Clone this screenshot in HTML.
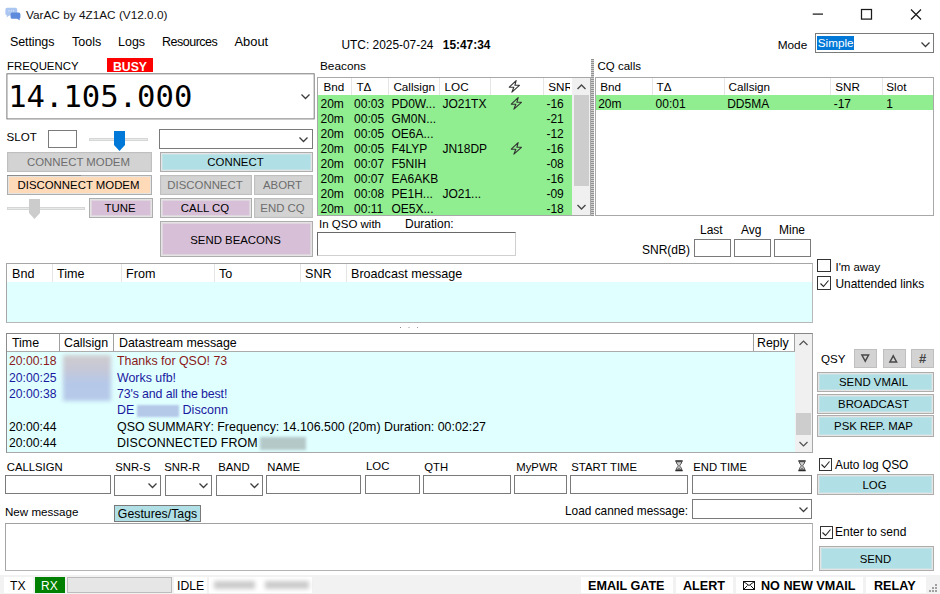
<!DOCTYPE html>
<html lang="en">
<head>
<meta charset="utf-8">
<title>VarAC by 4Z1AC (V12.0.0)</title>
<style>
html,body{margin:0;padding:0;background:#fff;}
body{width:940px;height:594px;position:relative;overflow:hidden;font-family:"Liberation Sans",sans-serif;font-size:12.4px;color:#000;}
#w{position:absolute;left:0;top:0;width:940px;height:594px;overflow:hidden;background:#fff;}
#w *{box-sizing:border-box;}
.t{position:absolute;white-space:nowrap;line-height:16px;height:16px;}
.box{position:absolute;background:#fff;border:1px solid #7a7a7a;}
.btn{position:absolute;border:1px solid #adadad;box-shadow:inset 0 0 0 1px #e4e4e4,inset 0 0 0 2px rgba(228,228,228,0.6);text-align:center;white-space:nowrap;font-size:11.4px;padding-right:2px;display:flex;align-items:center;justify-content:center;}
.grey{background:#d3d3d3;color:#6d6d6d;border-color:#bfbfbf;box-shadow:inset 0 0 0 1px #d0d0d0;}
.flat{box-shadow:none;padding-right:0;}
.blue{background:#b0e0e6;box-shadow:inset 0 0 0 1px #e4e4e4,inset 0 0 0 2px rgba(228,228,228,0.35);}
.peach{background:#ffdab9;box-shadow:inset 0 0 0 1px #e4e4e4;}
.th{background:#d8bfd8;}
.list{position:absolute;border:1px solid #a8a8a8;background:#fff;overflow:hidden;}
.hd{position:absolute;left:0;top:0;right:0;background:#fff;}
.t.h{font-size:11.7px;line-height:17px;height:17px;}
.t.r{font-size:12px;line-height:15px;height:15px;}
.sep{position:absolute;top:0;width:1px;background:#e5e5e5;}
.row{position:absolute;left:0;right:0;}
.chk{position:absolute;width:13px;height:13px;border:1px solid #333;background:#fff;}
.sb{position:absolute;background:#f0f0f0;}
.sp{position:absolute;background:#fff;top:577px;height:16px;}
.st{font-weight:bold;font-size:12.6px;}
svg{position:absolute;overflow:visible;}
</style>
</head>
<body>
<div id="w">

<!-- title bar -->
<svg style="left:5px;top:7px" width="16" height="14" viewBox="0 0 16 14">
  <path d="M2.200 0.800h8.200a1.800 1.800 0 0 1 1.800 1.800v4.200a1.800 1.800 0 0 1-1.800 1.800H4.200l-2.600 1.900 0.400-1.900a1.800 1.800 0 0 1-1.600-1.800V2.600a1.800 1.800 0 0 1 1.800-1.800z" fill="#abc6f0"/>
  <path d="M7.200 5.600h6.600a1.600 1.600 0 0 1 1.600 1.600v3a1.600 1.600 0 0 1-1 1.500l0.600 1.900-2.900-1.800H7.200a1.600 1.600 0 0 1-1.600-1.600v-3a1.600 1.600 0 0 1 1.600-1.600z" fill="#5f8bdc"/>
  <circle cx="4" cy="3.800" r="0.600" fill="#e8f0fc"/><circle cx="6.200" cy="3.800" r="0.600" fill="#e8f0fc"/><circle cx="8.400" cy="3.800" r="0.600" fill="#e8f0fc"/>
</svg>
<div class="t" style="left:26px;top:6.700px;font-size:11.8px;color:#111;">VarAC by 4Z1AC (V12.0.0)</div>
<svg style="left:812px;top:8px" width="112" height="13" viewBox="0 0 112 13" fill="none" stroke="#1a1a1a" stroke-width="1.25">
  <path d="M0.700 6.100h10.300"/>
  <rect x="49.500" y="1.500" width="10" height="9.600"/>
  <path d="M99 1.500l10 10M109 1.500l-10 10"/>
</svg>

<!-- menu -->
<div class="t" style="left:10px;top:34px;font-size:12.5px;letter-spacing:-0.1px;">Settings</div>
<div class="t" style="left:72px;top:34px;font-size:12.5px;">Tools</div>
<div class="t" style="left:118px;top:34px;font-size:12.5px;">Logs</div>
<div class="t" style="left:162px;top:34px;font-size:12.5px;letter-spacing:-0.5px;">Resources</div>
<div class="t" style="left:234.500px;top:34px;font-size:12.900px;">About</div>

<div class="t" style="left:341.500px;top:37px;font-size:11.9px;">UTC: 2025-07-24</div>
<div class="t" style="left:442.800px;top:37px;font-size:11.9px;font-weight:bold;">15:47:34</div>

<div class="t" style="left:777.700px;top:36.500px;font-size:11.8px;">Mode</div>
<div class="box" style="left:814.500px;top:33px;width:119.500px;height:20px;"></div>
<div class="t" style="left:817px;top:36px;height:13.500px;line-height:13.500px;width:36.500px;background:#0078d7;color:#fff;font-size:11.7px;padding-left:0.800px;">Simple</div>
<svg style="left:921px;top:41.500px" width="9" height="6" viewBox="0 0 9 6" fill="none" stroke="#3c3c3c" stroke-width="1.25"><path d="M0.500 0.500l4 4 4-4"/></svg>

<!-- frequency -->
<div class="t" style="left:7px;top:58px;font-size:11.4px;">FREQUENCY</div>
<div class="t" style="left:107px;top:58px;width:46px;height:14px;line-height:18px;background:#ff0000;color:#fff;font-weight:bold;font-size:12.3px;text-align:center;">BUSY</div>
<svg style="left:0;top:0" width="320" height="125"><rect x="6.900" y="73.800" width="307.300" height="45.100" fill="#fff" stroke="#7a7a7a" stroke-width="1"/></svg>
<div class="t" style="left:8.200px;top:78px;height:38px;line-height:38px;font-family:'DejaVu Sans Mono','Liberation Mono',monospace;font-size:30.6px;">14.105.000</div>
<svg style="left:301px;top:93.500px" width="9" height="6" viewBox="0 0 9 6" fill="none" stroke="#3c3c3c" stroke-width="1.25"><path d="M0.500 0.500l4 4 4-4"/></svg>

<!-- slot row -->
<div class="t" style="left:6.500px;top:128.500px;font-size:11.6px;">SLOT</div>
<div class="box" style="left:48px;top:130px;width:29px;height:18px;"></div>
<div style="position:absolute;left:89px;top:138px;width:59px;height:3px;background:#e7eaea;border:1px solid #d6d6d6;"></div>
<svg style="left:113.500px;top:130.500px" width="11" height="20" viewBox="0 0 11 20"><path d="M0 0h11v14l-5.500 6L0 14z" fill="#0078d7"/></svg>
<div class="box" style="left:159px;top:129px;width:154px;height:20px;"></div>
<svg style="left:299px;top:137px" width="9" height="6" viewBox="0 0 9 6" fill="none" stroke="#3c3c3c" stroke-width="1.25"><path d="M0.500 0.500l4 4 4-4"/></svg>

<!-- buttons -->
<div class="btn grey" style="left:7px;top:152px;width:145px;height:20px;">CONNECT MODEM</div>
<div class="btn blue" style="left:160px;top:152px;width:153px;height:20px;">CONNECT</div>
<div class="btn peach" style="left:7px;top:175px;width:145px;height:20px;">DISCONNECT MODEM</div>
<div style="position:absolute;left:7px;top:175px;width:74px;height:1px;background:#8c8c8c;z-index:2;"></div>
<div class="btn grey" style="left:160px;top:175px;width:92px;height:20px;">DISCONNECT</div>
<div class="btn grey" style="left:254px;top:175px;width:59px;height:20px;">ABORT</div>
<div style="position:absolute;left:7px;top:207px;width:78px;height:3px;background:#e7eaea;border:1px solid #d6d6d6;"></div>
<svg style="left:29px;top:199px" width="11" height="20" viewBox="0 0 11 20"><path d="M0 0h11v14l-5.500 6L0 14z" fill="#cccccc"/></svg>
<div class="btn th" style="left:89px;top:198px;width:64px;height:20px;">TUNE</div>
<div class="btn th" style="left:160px;top:198px;width:92px;height:20px;">CALL CQ</div>
<div class="btn grey" style="left:254px;top:198px;width:59px;height:20px;">END CQ</div>
<div class="btn th" style="left:160px;top:221px;width:153px;height:36px;padding-top:1px;">SEND BEACONS</div>

<!--LISTS-->
<!-- beacons -->
<div class="t" style="left:320px;top:57.500px;font-size:11.8px;">Beacons</div>
<div class="list" id="beacons" style="left:317px;top:77px;width:274px;height:139px;background:#90ee90;">
  <div class="hd" style="height:17px;"></div>
  <div class="sep" style="left:32.5px;height:17px;"></div>
  <div class="sep" style="left:69.5px;height:17px;"></div>
  <div class="sep" style="left:121px;height:17px;"></div>
  <div class="sep" style="left:171.5px;height:17px;"></div>
  <div class="sep" style="left:225px;height:17px;"></div>
  <div class="t h" style="left:5.4px;top:0px;">Bnd</div>
  <div class="t h" style="left:38.4px;top:0px;">TΔ</div>
  <div class="t h" style="left:75.4px;top:0px;">Callsign</div>
  <div class="t h" style="left:126.6px;top:0px;">LOC</div>
  <div class="t h" style="left:230.3px;top:0px;width:22px;overflow:hidden;">SNR</div>
  <svg style="left:190.4px;top:1.6px" width="12.700" height="12.700" viewBox="0 0 12 12" fill="none" stroke="#333" stroke-width="1.05" stroke-linejoin="round"><path d="M7.700 0.600L1.200 6.800h4.300l-1.800 4.700 7.100-6.500H6.500z"/></svg>
  <div class="t r" style="left:2.5px;top:19px;">20m</div><div class="t r" style="left:36.1px;top:19px;">00:03</div><div class="t r" style="left:73.5px;top:19px;">PD0W...</div><div class="t r" style="left:124.4px;top:19px;">JO21TX</div><div class="t r" style="left:228.4px;top:19px;">-16</div><svg style="left:191.9px;top:19.3px" width="12.700" height="12.700" viewBox="0 0 12 12" fill="none" stroke="#333" stroke-width="1.05" stroke-linejoin="round"><path d="M7.700 0.600L1.200 6.800h4.300l-1.800 4.700 7.100-6.500H6.500z"/></svg>
  <div class="t r" style="left:2.5px;top:34px;">20m</div><div class="t r" style="left:36.1px;top:34px;">00:05</div><div class="t r" style="left:73.5px;top:34px;">GM0N...</div><div class="t r" style="left:228.4px;top:34px;">-21</div>
  <div class="t r" style="left:2.5px;top:49px;">20m</div><div class="t r" style="left:36.1px;top:49px;">00:05</div><div class="t r" style="left:73.5px;top:49px;">OE6A...</div><div class="t r" style="left:228.4px;top:49px;">-12</div>
  <div class="t r" style="left:2.5px;top:64px;">20m</div><div class="t r" style="left:36.1px;top:64px;">00:05</div><div class="t r" style="left:73.5px;top:64px;">F4LYP</div><div class="t r" style="left:124.4px;top:64px;">JN18DP</div><div class="t r" style="left:228.4px;top:64px;">-16</div><svg style="left:191.9px;top:64.3px" width="12.700" height="12.700" viewBox="0 0 12 12" fill="none" stroke="#333" stroke-width="1.05" stroke-linejoin="round"><path d="M7.700 0.600L1.200 6.800h4.300l-1.800 4.700 7.100-6.500H6.500z"/></svg>
  <div class="t r" style="left:2.5px;top:79px;">20m</div><div class="t r" style="left:36.1px;top:79px;">00:07</div><div class="t r" style="left:73.5px;top:79px;">F5NIH</div><div class="t r" style="left:228.4px;top:79px;">-08</div>
  <div class="t r" style="left:2.5px;top:94px;">20m</div><div class="t r" style="left:36.1px;top:94px;">00:07</div><div class="t r" style="left:73.5px;top:94px;">EA6AKB</div><div class="t r" style="left:228.4px;top:94px;">-16</div>
  <div class="t r" style="left:2.5px;top:109px;">20m</div><div class="t r" style="left:36.1px;top:109px;">00:08</div><div class="t r" style="left:73.5px;top:109px;">PE1H...</div><div class="t r" style="left:124.4px;top:109px;">JO21...</div><div class="t r" style="left:228.4px;top:109px;">-09</div>
  <div class="t r" style="left:2.5px;top:124px;">20m</div><div class="t r" style="left:36.1px;top:124px;">00:11</div><div class="t r" style="left:73.5px;top:124px;">OE5X...</div><div class="t r" style="left:228.4px;top:124px;">-18</div>
  <div class="sb" style="left:254px;top:0;width:18px;height:137px;"></div>
  <div style="position:absolute;left:255.500px;top:17px;width:15.500px;height:90.500px;background:#cdcdcd;"></div>
  <svg style="left:258.800px;top:6px" width="9" height="6" viewBox="0 0 9 6" fill="none" stroke="#484848" stroke-width="1.4"><path d="M0.500 5l4-4 4 4"/></svg>
  <svg style="left:258.600px;top:126px" width="9" height="6" viewBox="0 0 9 6" fill="none" stroke="#484848" stroke-width="1.4"><path d="M0.500 1l4 4 4-4"/></svg>
</div>

<!-- cq calls -->
<div class="t" style="left:597.500px;top:58px;font-size:11.5px;">CQ calls</div>
<div class="list" id="cq" style="left:595px;top:77px;width:339px;height:139px;">
  <div class="hd" style="height:17px;"></div>
  <div class="sep" style="left:55.5px;height:17px;"></div>
  <div class="sep" style="left:128.3px;height:17px;"></div>
  <div class="sep" style="left:234.4px;height:17px;"></div>
  <div class="sep" style="left:286.1px;height:17px;"></div>
  <div class="t h" style="left:4.2px;top:0px;">Bnd</div>
  <div class="t h" style="left:60.5px;top:0px;">TΔ</div>
  <div class="t h" style="left:132.5px;top:0px;">Callsign</div>
  <div class="t h" style="left:239.3px;top:0px;">SNR</div>
  <div class="t h" style="left:290.3px;top:0px;">Slot</div>
  <div class="row" style="top:17px;height:15px;background:#90ee90;"></div>
  <div class="t r" style="left:2.2px;top:19px;">20m</div>
  <div class="t r" style="left:59.6px;top:19px;">00:01</div>
  <div class="t r" style="left:131.2px;top:19px;">DD5MA</div>
  <div class="t r" style="left:237.7px;top:19px;">-17</div>
  <div class="t r" style="left:290.2px;top:19px;">1</div>
</div>
<!--/LISTS-->

<!-- splitter -->
<div style="position:absolute;left:591px;top:59px;width:3px;height:157px;background-color:#b0b0b0;background-image:repeating-linear-gradient(180deg,#929292 0 1px,#cfcfcf 1px 2px);"></div>

<!-- in qso -->
<div class="t" style="left:319px;top:216px;font-size:11.5px;">In QSO with</div>
<div class="t" style="left:405px;top:216px;font-size:12px;">Duration:</div>
<div class="box" style="left:317px;top:232px;width:199px;height:24px;border-color:#696969 #d0d0d0 #d0d0d0 #696969;"></div>

<div class="t" style="left:700px;top:222px;font-size:12px;">Last</div>
<div class="t" style="left:741px;top:222px;font-size:12px;">Avg</div>
<div class="t" style="left:779px;top:222px;font-size:12px;">Mine</div>
<div class="t" style="left:642px;top:242px;font-size:12px;">SNR(dB)</div>
<div class="box" style="left:694px;top:239px;width:37px;height:18px;"></div>
<div class="box" style="left:734px;top:239px;width:37px;height:18px;"></div>
<div class="box" style="left:774px;top:239px;width:37px;height:18px;"></div>

<!-- broadcast list -->
<div class="list" id="bc" style="left:6px;top:263px;width:807px;height:60px;background:#e0ffff;border-color:#a6a6a6 #b8b8b8 #b8b8b8 #a6a6a6;">
  <div class="hd" style="height:18px;"></div>
  <div class="sep" style="left:45px;height:18px;"></div>
  <div class="sep" style="left:114px;height:18px;"></div>
  <div class="sep" style="left:207px;height:18px;"></div>
  <div class="sep" style="left:293px;height:18px;"></div>
  <div class="sep" style="left:339px;height:18px;"></div>
  <div class="t" style="left:5px;top:2px;font-size:12.6px;">Bnd</div>
  <div class="t" style="left:50px;top:2px;font-size:12.6px;">Time</div>
  <div class="t" style="left:119px;top:2px;font-size:12.6px;">From</div>
  <div class="t" style="left:212px;top:2px;font-size:12.6px;">To</div>
  <div class="t" style="left:298px;top:2px;font-size:12.6px;">SNR</div>
  <div class="t" style="left:344px;top:2px;font-size:12.6px;">Broadcast message</div>
</div>

<div class="chk" style="left:817px;top:259px;width:14px;"></div>
<div class="t" style="left:835.500px;top:259px;font-size:11.4px;">I'm away</div>
<div class="chk" style="left:817px;top:276px;width:14px;height:14px;"></div>
<svg style="left:818.500px;top:277.500px" width="11" height="11" viewBox="0 0 11 11" fill="none" stroke="#222" stroke-width="1.1"><path d="M1.500 5.500l3 3 5-6"/></svg>
<div class="t" style="left:835.500px;top:276px;font-size:11.9px;">Unattended links</div>

<!-- dots -->
<div style="position:absolute;left:399.500px;top:327px;width:1px;height:1px;background:#8a8a8a;box-shadow:8.500px 0 0 #999,17px 0 0 #999;"></div>

<!-- datastream -->
<div class="list" id="ds" style="left:6px;top:333px;width:807px;height:120px;background:#e0ffff;border-color:#868686 #a8a8a8 #a8a8a8 #8c8c8c;">
  <div class="hd" style="height:18px;border-bottom:1px solid #ababab;"></div>
  <div class="sep" style="left:52px;height:17px;background:#a0a0a0;"></div>
  <div class="sep" style="left:106px;height:17px;background:#a0a0a0;"></div>
  <div class="sep" style="left:745.500px;height:17px;background:#a0a0a0;"></div><div class="sep" style="left:787px;height:17px;background:#a0a0a0;"></div>
  <div class="t" style="left:5px;top:1px;">Time</div>
  <div class="t" style="left:57px;top:1px;">Callsign</div>
  <div class="t" style="left:112px;top:1px;">Datastream message</div>
  <div class="t" style="left:750px;top:1px;">Reply</div>
  <div class="t" style="left:2px;top:19px;font-size:12.2px;color:#8b1a1a;">20:00:18</div>
  <div class="t" style="left:110px;top:19px;color:#8b1a1a;">Thanks for QSO! 73</div>
  <div class="t" style="left:2px;top:36px;font-size:12.2px;color:#1a1aa0;">20:00:25</div>
  <div class="t" style="left:110px;top:36px;color:#1a1aa0;">Works ufb!</div>
  <div class="t" style="left:2px;top:52px;font-size:12.2px;color:#1a1aa0;">20:00:38</div>
  <div class="t" style="left:110px;top:52px;color:#1a1aa0;letter-spacing:-0.14px;">73's and all the best!</div>
  <div class="t" style="left:110px;top:68px;color:#1a1aa0;">DE</div>
  <div class="t" style="left:175.500px;top:68px;color:#1a1aa0;font-size:12.6px;">Disconn</div>
  <div class="t" style="left:2px;top:85px;font-size:12.2px;">20:00:44</div>
  <div class="t" style="left:110px;top:85px;">QSO SUMMARY: Frequency: 14.106.500 (20m) Duration: 00:02:27</div>
  <div class="t" style="left:2px;top:101px;font-size:12.2px;">20:00:44</div>
  <div class="t" style="left:110px;top:101px;letter-spacing:0.1px;">DISCONNECTED FROM</div>
  <div style="position:absolute;left:56px;top:21px;width:48px;height:46px;background:linear-gradient(180deg,#cfcccf 0%,#c6c8d6 30%,#b6c8e8 60%,#b6cae9 100%);filter:blur(2.2px);"></div>
  <div style="position:absolute;left:130px;top:71px;width:42px;height:12px;background:#b4c8e8;filter:blur(1px);"></div>
  <div style="position:absolute;left:253px;top:103px;width:46px;height:13px;background:#b4c8c8;filter:blur(1.5px);"></div>
  <div class="sb" style="left:788px;top:0;width:17px;height:118px;"></div>
  <div style="position:absolute;left:789px;top:79px;width:15px;height:22px;background:#cdcdcd;"></div>
  <svg style="left:792px;top:6px" width="9" height="6" viewBox="0 0 9 6" fill="none" stroke="#505050" stroke-width="1.2"><path d="M0.500 5l4-4 4 4"/></svg>
  <svg style="left:792px;top:106.500px" width="9" height="6" viewBox="0 0 9 6" fill="none" stroke="#505050" stroke-width="1.2"><path d="M0.500 1l4 4 4-4"/></svg>
</div>

<!-- right buttons -->
<div class="t" style="left:821px;top:351.300px;font-size:11.6px;">QSY</div>
<div class="btn grey flat" style="left:854px;top:349px;width:23px;height:19px;"><svg style="position:static;margin:-1px 1px 0 0" width="8.500" height="8" viewBox="0 0 8.500 8" fill="none" stroke="#484848" stroke-width="1.45"><path d="M0.900 1h6.700L4.250 7.200z"/></svg></div>
<div class="btn grey flat" style="left:882.500px;top:349px;width:23px;height:19px;"><svg style="position:static;margin:0 1px 0 0" width="8.500" height="8" viewBox="0 0 8.500 8" fill="none" stroke="#484848" stroke-width="1.45"><path d="M0.900 7h6.700L4.250 0.800z"/></svg></div>
<div class="btn grey flat" style="left:911px;top:349px;width:23px;height:19px;font-size:13px;color:#444;font-weight:bold;">#</div>
<div class="btn blue" style="left:817px;top:372px;width:117px;height:20px;padding-right:4px;">SEND VMAIL</div>
<div class="btn blue" style="left:817px;top:394px;width:117px;height:20px;padding-right:4px;">BROADCAST</div>
<div class="btn blue" style="left:817px;top:415px;width:117px;height:22px;padding-right:4px;">PSK REP. MAP</div>

<!-- log row -->
<div class="t" style="left:6.800px;top:459.300px;font-size:11.3px;">CALLSIGN</div>
<div class="t" style="left:115.3px;top:459.300px;font-size:11.3px;">SNR-S</div>
<div class="t" style="left:164.3px;top:459.300px;font-size:11.3px;">SNR-R</div>
<div class="t" style="left:218.3px;top:459.300px;font-size:11.3px;">BAND</div>
<div class="t" style="left:267.3px;top:459.300px;font-size:11.3px;">NAME</div>
<div class="t" style="left:366px;top:458.300px;font-size:11.4px;">LOC</div>
<div class="t" style="left:424.3px;top:459.300px;font-size:11.3px;">QTH</div>
<div class="t" style="left:516.3px;top:459.300px;font-size:11.3px;">MyPWR</div>
<div class="t" style="left:571.3px;top:459.300px;font-size:11.3px;">START TIME</div>
<div class="t" style="left:693.3px;top:459.300px;font-size:11.3px;">END TIME</div>
<div class="box" style="left:5px;top:475px;width:106px;height:19px;"></div>
<div class="box" style="left:114px;top:475px;width:47px;height:21px;"></div>
<div class="box" style="left:165px;top:475px;width:47px;height:21px;"></div>
<div class="box" style="left:216px;top:475px;width:47px;height:21px;"></div>
<div class="box" style="left:266px;top:475px;width:95px;height:19px;"></div>
<div class="box" style="left:365px;top:475px;width:55px;height:19px;"></div>
<div class="box" style="left:423px;top:475px;width:88px;height:19px;"></div>
<div class="box" style="left:514px;top:475px;width:53px;height:19px;"></div>
<div class="box" style="left:570px;top:475px;width:118px;height:19px;"></div>
<div class="box" style="left:692px;top:475px;width:120px;height:19px;"></div>
<svg style="left:148px;top:483px" width="9" height="6" viewBox="0 0 9 6" fill="none" stroke="#3c3c3c" stroke-width="1.25"><path d="M0.500 0.500l4 4 4-4"/></svg>
<svg style="left:199px;top:483px" width="9" height="6" viewBox="0 0 9 6" fill="none" stroke="#3c3c3c" stroke-width="1.25"><path d="M0.500 0.500l4 4 4-4"/></svg>
<svg style="left:250px;top:483px" width="9" height="6" viewBox="0 0 9 6" fill="none" stroke="#3c3c3c" stroke-width="1.25"><path d="M0.500 0.500l4 4 4-4"/></svg>
<svg class="hg" style="left:675.3px;top:459.700px" width="8" height="11.400" viewBox="0 0 8 11.400"><path d="M0.300 0.200h7.400v1.500h-7.400zM0.300 9.700h7.400v1.500h-7.400z" fill="#2a2a2a"/><path d="M1.300 1.700c0 2.300 1.900 2.900 1.900 4s-1.900 1.700-1.900 4h5.400c0-2.300-1.900-2.900-1.900-4s1.900-1.700 1.900-4z" fill="#cfcfcf" stroke="#3a3a3a" stroke-width="0.900"/><path d="M2.400 9.400c0.300-1.200 1.600-1.800 1.600-1.800s1.300 0.600 1.600 1.800z" fill="#777"/></svg>
<svg class="hg" style="left:797.8px;top:459.700px" width="8" height="11.400" viewBox="0 0 8 11.400"><path d="M0.300 0.200h7.400v1.500h-7.400zM0.300 9.700h7.400v1.500h-7.400z" fill="#2a2a2a"/><path d="M1.300 1.700c0 2.300 1.900 2.900 1.900 4s-1.900 1.700-1.900 4h5.400c0-2.300-1.900-2.900-1.900-4s1.900-1.700 1.900-4z" fill="#cfcfcf" stroke="#3a3a3a" stroke-width="0.900"/><path d="M2.400 9.400c0.300-1.200 1.600-1.800 1.600-1.800s1.300 0.600 1.600 1.800z" fill="#777"/></svg>

<div class="chk" style="left:819px;top:458px;"></div>
<svg style="left:820px;top:459px" width="11" height="11" viewBox="0 0 11 11" fill="none" stroke="#222" stroke-width="1.1"><path d="M1.500 5.500l3 3 5-6"/></svg>
<div class="t" style="left:835px;top:457px;font-size:11.9px;">Auto log QSO</div>
<div class="btn blue" style="left:817px;top:474px;width:117px;height:21px;">LOG</div>

<!-- new message -->
<div class="t" style="left:5px;top:504px;font-size:11.6px;">New message</div>
<div class="t" style="left:114px;top:505px;width:87px;height:17px;line-height:16px;border:1px solid #7a7a7a;background:#b0e0e6;text-align:center;font-size:12.3px;">Gestures/Tags</div>
<div class="t" style="left:565px;top:503px;font-size:11.85px;">Load canned message:</div>
<div class="box" style="left:692px;top:499px;width:120px;height:20px;"></div>
<svg style="left:798.500px;top:506.500px" width="9" height="6" viewBox="0 0 9 6" fill="none" stroke="#3c3c3c" stroke-width="1.25"><path d="M0.500 0.500l4 4 4-4"/></svg>
<div class="box" style="left:5px;top:523px;width:808px;height:48px;border-color:#a0a0a0 #b4b4b4 #b4b4b4 #a6a6a6;"></div>
<div class="chk" style="left:820px;top:526px;"></div>
<svg style="left:821px;top:527px" width="11" height="11" viewBox="0 0 11 11" fill="none" stroke="#222" stroke-width="1.1"><path d="M1.500 5.500l3 3 5-6"/></svg>
<div class="t" style="left:835px;top:524px;font-size:12px;">Enter to send</div>
<div class="btn blue" style="left:819px;top:546px;width:115px;height:25px;">SEND</div>

<!-- status bar -->
<div style="position:absolute;left:0;top:575px;width:940px;height:19px;background:#f2f2f2;"></div>
<div class="sp" style="left:4px;width:29px;"></div>
<div class="t st" style="left:10px;top:578px;font-weight:normal;font-size:12.2px;">TX</div>
<div class="sp" style="left:35px;width:30px;background:#008000;"></div>
<div class="t st" style="left:41px;top:578px;font-weight:normal;font-size:12px;color:#fff;">RX</div>
<div style="position:absolute;left:67px;top:577px;width:105px;height:16px;background:#e6e6e6;border:1px solid #bcbcbc;"></div>
<div class="sp" style="left:174px;width:33px;"></div>
<div class="t st" style="left:177px;top:578px;font-weight:normal;font-size:12.2px;">IDLE</div>
<div class="sp" style="left:209px;width:103px;"></div>
<div style="position:absolute;left:214px;top:581px;width:41px;height:8px;background:#cbcbcb;filter:blur(2.2px);"></div>
<div style="position:absolute;left:265px;top:581px;width:44px;height:8px;background:#cbcbcb;filter:blur(2.2px);"></div>
<div class="sp" style="left:581px;width:92px;"></div>
<div class="t st" style="left:588px;top:578px;">EMAIL GATE</div>
<div class="sp" style="left:676px;width:57px;"></div>
<div class="t st" style="left:683px;top:578px;">ALERT</div>
<div class="sp" style="left:736px;width:127px;"></div>
<svg style="left:743px;top:581px" width="12" height="9" viewBox="0 0 12 9" fill="none" stroke="#111" stroke-width="1"><rect x="0.500" y="0.500" width="11" height="8"/><path d="M0.500 0.500l5.500 4 5.500-4M0.500 8.500l4-4M11.500 8.500l-4-4"/></svg>
<div class="t st" style="left:761px;top:578px;">NO NEW VMAIL</div>
<div class="sp" style="left:866px;width:60px;"></div>
<div class="t st" style="left:874px;top:578px;">RELAY</div>
<svg style="left:929px;top:584px" width="9" height="9" viewBox="0 0 9 9" fill="#a0a0a0"><rect x="6" y="0" width="2" height="2"/><rect x="3" y="3" width="2" height="2"/><rect x="6" y="3" width="2" height="2"/><rect x="0" y="6" width="2" height="2"/><rect x="3" y="6" width="2" height="2"/><rect x="6" y="6" width="2" height="2"/></svg>

</div>
</body>
</html>
